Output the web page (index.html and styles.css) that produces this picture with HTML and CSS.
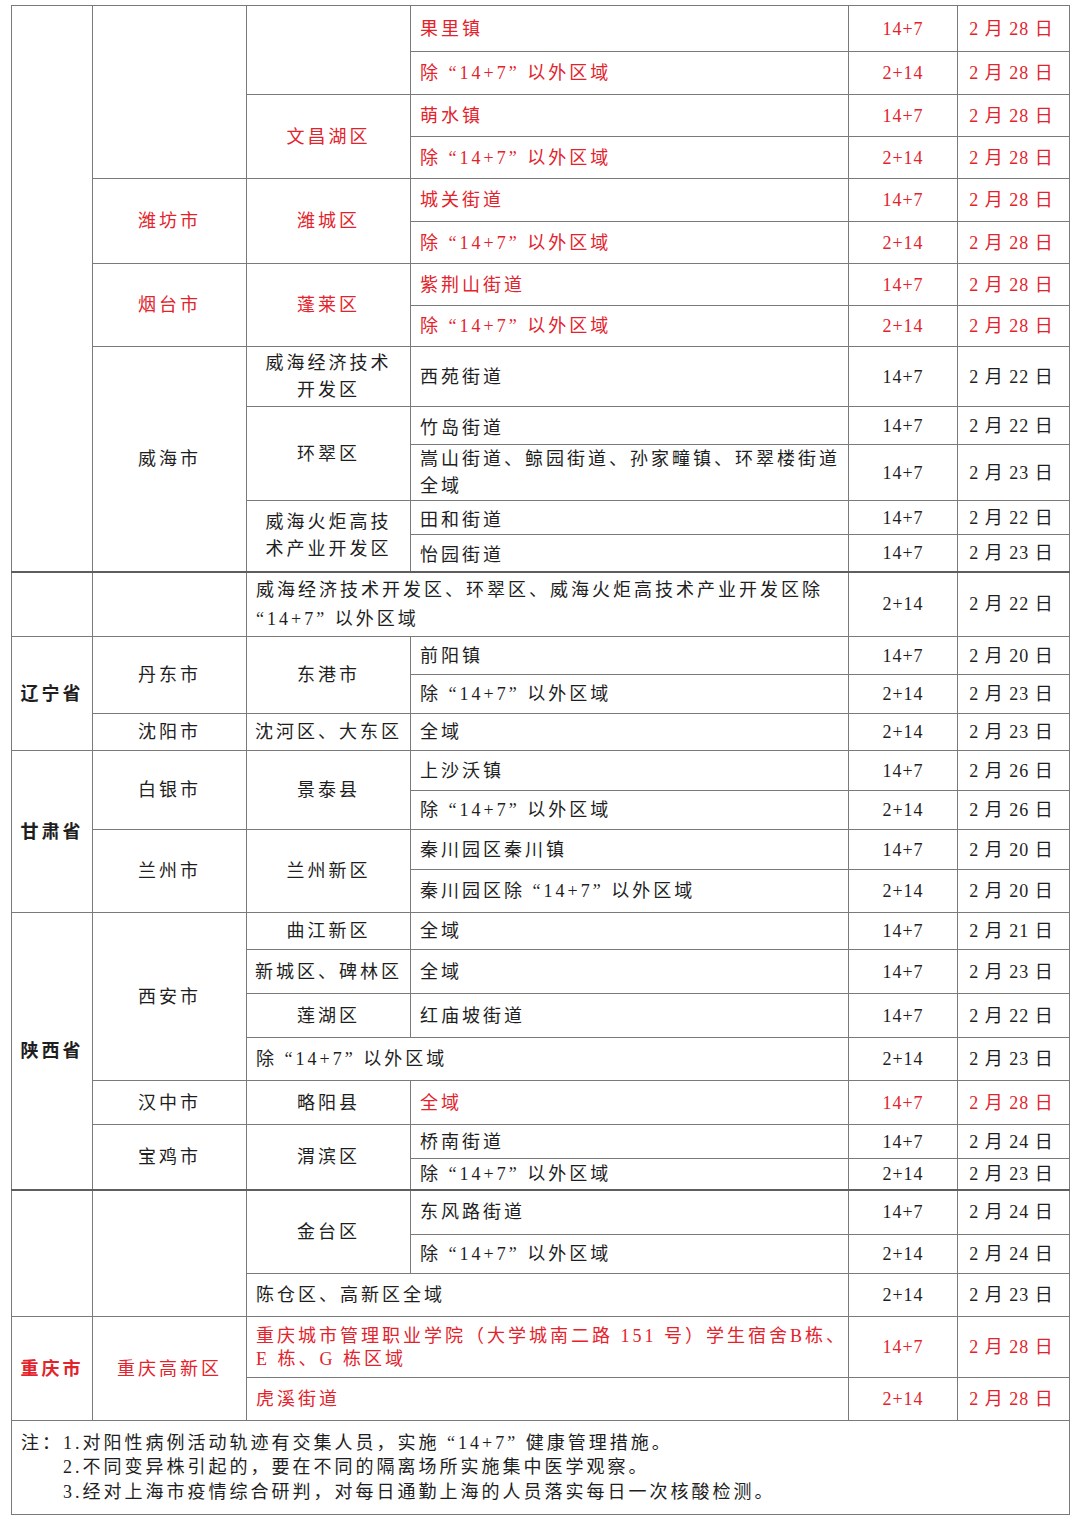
FILE: index.html
```html
<!DOCTYPE html>
<html lang="zh-CN">
<head>
<meta charset="utf-8">
<title>风险区域表</title>
<link rel="stylesheet" href="styles.css">
</head>
<body>
<table class="sheet">
  <colgroup>
    <col class="w-prov"><col class="w-city"><col class="w-dist"><col class="w-area"><col class="w-lvl"><col class="w-date">
  </colgroup>
  <tbody>
    <tr class="h46 red">
      <td rowspan="13"></td>
      <td rowspan="4"></td>
      <td rowspan="2"></td>
      <td class="area">果里镇</td><td class="lvl">14+7</td><td class="date">2 月 28 日</td>
    </tr>
    <tr class="h43 red">
      <td class="area">除 “14+7” 以外区域</td><td class="lvl">2+14</td><td class="date">2 月 28 日</td>
    </tr>
    <tr class="h42 red">
      <td rowspan="2" class="ctr">文昌湖区</td>
      <td class="area">萌水镇</td><td class="lvl">14+7</td><td class="date">2 月 28 日</td>
    </tr>
    <tr class="h42 red">
      <td class="area">除 “14+7” 以外区域</td><td class="lvl">2+14</td><td class="date">2 月 28 日</td>
    </tr>
    <tr class="h43 red">
      <td rowspan="2" class="ctr">潍坊市</td>
      <td rowspan="2" class="ctr">潍城区</td>
      <td class="area">城关街道</td><td class="lvl">14+7</td><td class="date">2 月 28 日</td>
    </tr>
    <tr class="h42 red">
      <td class="area">除 “14+7” 以外区域</td><td class="lvl">2+14</td><td class="date">2 月 28 日</td>
    </tr>
    <tr class="h42 red">
      <td rowspan="2" class="ctr">烟台市</td>
      <td rowspan="2" class="ctr">蓬莱区</td>
      <td class="area">紫荆山街道</td><td class="lvl">14+7</td><td class="date">2 月 28 日</td>
    </tr>
    <tr class="h41 red">
      <td class="area">除 “14+7” 以外区域</td><td class="lvl">2+14</td><td class="date">2 月 28 日</td>
    </tr>
    <tr class="h60">
      <td rowspan="5" class="ctr">威海市</td>
      <td class="ctr two">威海经济技术<br>开发区</td>
      <td class="area">西苑街道</td><td class="lvl">14+7</td><td class="date">2 月 22 日</td>
    </tr>
    <tr class="h38">
      <td rowspan="2" class="ctr">环翠区</td>
      <td class="area low">竹岛街道</td><td class="lvl">14+7</td><td class="date">2 月 22 日</td>
    </tr>
    <tr class="h55">
      <td class="area two">嵩山街道、鲸园街道、孙家疃镇、环翠楼街道<br>全域</td><td class="lvl">14+7</td><td class="date">2 月 23 日</td>
    </tr>
    <tr class="h34">
      <td rowspan="2" class="ctr two">威海火炬高技<br>术产业开发区</td>
      <td class="area low">田和街道</td><td class="lvl">14+7</td><td class="date">2 月 22 日</td>
    </tr>
    <tr class="h37">
      <td class="area low">怡园街道</td><td class="lvl">14+7</td><td class="date">2 月 23 日</td>
    </tr>
    <tr class="h65 thick">
      <td></td>
      <td></td>
      <td colspan="2" class="area wide">威海经济技术开发区、环翠区、威海火炬高技术产业开发区除<br>“14+7” 以外区域</td>
      <td class="lvl">2+14</td><td class="date">2 月 22 日</td>
    </tr>
    <tr class="h38">
      <td rowspan="3" class="ctr prov">辽宁省</td>
      <td rowspan="2" class="ctr">丹东市</td>
      <td rowspan="2" class="ctr">东港市</td>
      <td class="area">前阳镇</td><td class="lvl">14+7</td><td class="date">2 月 20 日</td>
    </tr>
    <tr class="h39">
      <td class="area">除 “14+7” 以外区域</td><td class="lvl">2+14</td><td class="date">2 月 23 日</td>
    </tr>
    <tr class="h37">
      <td class="ctr">沈阳市</td>
      <td class="ctr">沈河区、大东区</td>
      <td class="area">全域</td><td class="lvl">2+14</td><td class="date">2 月 23 日</td>
    </tr>
    <tr class="h40">
      <td rowspan="4" class="ctr prov">甘肃省</td>
      <td rowspan="2" class="ctr">白银市</td>
      <td rowspan="2" class="ctr">景泰县</td>
      <td class="area">上沙沃镇</td><td class="lvl">14+7</td><td class="date">2 月 26 日</td>
    </tr>
    <tr class="h39">
      <td class="area">除 “14+7” 以外区域</td><td class="lvl">2+14</td><td class="date">2 月 26 日</td>
    </tr>
    <tr class="h40">
      <td rowspan="2" class="ctr">兰州市</td>
      <td rowspan="2" class="ctr">兰州新区</td>
      <td class="area">秦川园区秦川镇</td><td class="lvl">14+7</td><td class="date">2 月 20 日</td>
    </tr>
    <tr class="h43">
      <td class="area">秦川园区除 “14+7” 以外区域</td><td class="lvl">2+14</td><td class="date">2 月 20 日</td>
    </tr>
    <tr class="h37">
      <td rowspan="7" class="ctr prov">陕西省</td>
      <td rowspan="4" class="ctr">西安市</td>
      <td class="ctr">曲江新区</td>
      <td class="area">全域</td><td class="lvl">14+7</td><td class="date">2 月 21 日</td>
    </tr>
    <tr class="h44">
      <td class="ctr">新城区、碑林区</td>
      <td class="area">全域</td><td class="lvl">14+7</td><td class="date">2 月 23 日</td>
    </tr>
    <tr class="h44">
      <td class="ctr">莲湖区</td>
      <td class="area">红庙坡街道</td><td class="lvl">14+7</td><td class="date">2 月 22 日</td>
    </tr>
    <tr class="h43">
      <td colspan="2" class="area">除 “14+7” 以外区域</td><td class="lvl">2+14</td><td class="date">2 月 23 日</td>
    </tr>
    <tr class="h44">
      <td class="ctr">汉中市</td>
      <td class="ctr">略阳县</td>
      <td class="area red">全域</td><td class="lvl red">14+7</td><td class="date red">2 月 28 日</td>
    </tr>
    <tr class="h34">
      <td rowspan="2" class="ctr">宝鸡市</td>
      <td rowspan="2" class="ctr">渭滨区</td>
      <td class="area">桥南街道</td><td class="lvl">14+7</td><td class="date">2 月 24 日</td>
    </tr>
    <tr class="h31">
      <td class="area">除 “14+7” 以外区域</td><td class="lvl">2+14</td><td class="date">2 月 23 日</td>
    </tr>
    <tr class="h45 thick">
      <td rowspan="3"></td>
      <td rowspan="3"></td>
      <td rowspan="2" class="ctr">金台区</td>
      <td class="area">东风路街道</td><td class="lvl">14+7</td><td class="date">2 月 24 日</td>
    </tr>
    <tr class="h39">
      <td class="area">除 “14+7” 以外区域</td><td class="lvl">2+14</td><td class="date">2 月 24 日</td>
    </tr>
    <tr class="h43">
      <td colspan="2" class="area">陈仓区、高新区全域</td><td class="lvl">2+14</td><td class="date">2 月 23 日</td>
    </tr>
    <tr class="h61 red">
      <td rowspan="2" class="ctr prov">重庆市</td>
      <td rowspan="2" class="ctr">重庆高新区</td>
      <td colspan="2" class="area tight">重庆城市管理职业学院（大学城南二路 151 号）学生宿舍B栋、<br>E 栋、G 栋区域</td>
      <td class="lvl">14+7</td><td class="date">2 月 28 日</td>
    </tr>
    <tr class="h43 red">
      <td colspan="2" class="area">虎溪街道</td><td class="lvl">2+14</td><td class="date">2 月 28 日</td>
    </tr>
    <tr class="h94">
      <td colspan="6" class="notes">
        <div class="note-box">
          <span class="note-label">注：</span>
          <div class="note-lines">
            <p>1.对阳性病例活动轨迹有交集人员，实施 “14+7” 健康管理措施。</p>
            <p>2.不同变异株引起的，要在不同的隔离场所实施集中医学观察。</p>
            <p>3.经对上海市疫情综合研判，对每日通勤上海的人员落实每日一次核酸检测。</p>
          </div>
        </div>
      </td>
    </tr>
  </tbody>
</table>
</body>
</html>
```

FILE: styles.css
```css
html, body {
  margin: 0;
  padding: 0;
  background: #ffffff;
}

body {
  padding: 5px 0 0 11px;
  font-family: "Liberation Serif", "Noto Sans CJK SC", serif;
  font-size: 18px;
  color: #1e1e1e;
}

.sheet {
  border-collapse: collapse;
  table-layout: fixed;
  width: 1058px;
}

.w-prov { width: 81px; }
.w-city { width: 154px; }
.w-dist { width: 164px; }
.w-area { width: 438px; }
.w-lvl  { width: 109px; }
.w-date { width: 112px; }

.sheet td {
  border: 1px solid #7a7a7a;
  padding: 1px 0 0 0;
  vertical-align: middle;
  letter-spacing: 3px;
  line-height: 27px;
  white-space: nowrap;
}

.sheet tr.thick > td {
  border-top: 2px solid #5e5e5e;
}

.ctr { text-align: center; }

.area {
  text-align: left;
  padding-left: 9px !important;
}

.low { padding-top: 6px !important; }

.wide { line-height: 29px !important; }
.tight { line-height: 23px !important; }

.lvl, .date {
  text-align: center;
  letter-spacing: 1px !important;
}

.date { padding-right: 4px !important; }

.prov { font-weight: 700; }

.red, .red td { color: #e3232c; }

.h31 { height: 31px; }
.h34 { height: 34px; }
.h37 { height: 37px; }
.h38 { height: 38px; }
.h39 { height: 39px; }
.h40 { height: 40px; }
.h41 { height: 41px; }
.h42 { height: 42px; }
.h43 { height: 43px; }
.h44 { height: 44px; }
.h45 { height: 45px; }
.h46 { height: 46px; }
.h55 { height: 55px; }
.h60 { height: 60px; }
.h61 { height: 61px; }
.h65 { height: 65px; }
.h94 { height: 94px; }

.notes {
  padding: 0 0 0 9px !important;
  text-align: left;
  line-height: 24.5px !important;
}

.note-box {
  display: flex;
  align-items: flex-start;
}

.note-lines p {
  margin: 0;
}
```
